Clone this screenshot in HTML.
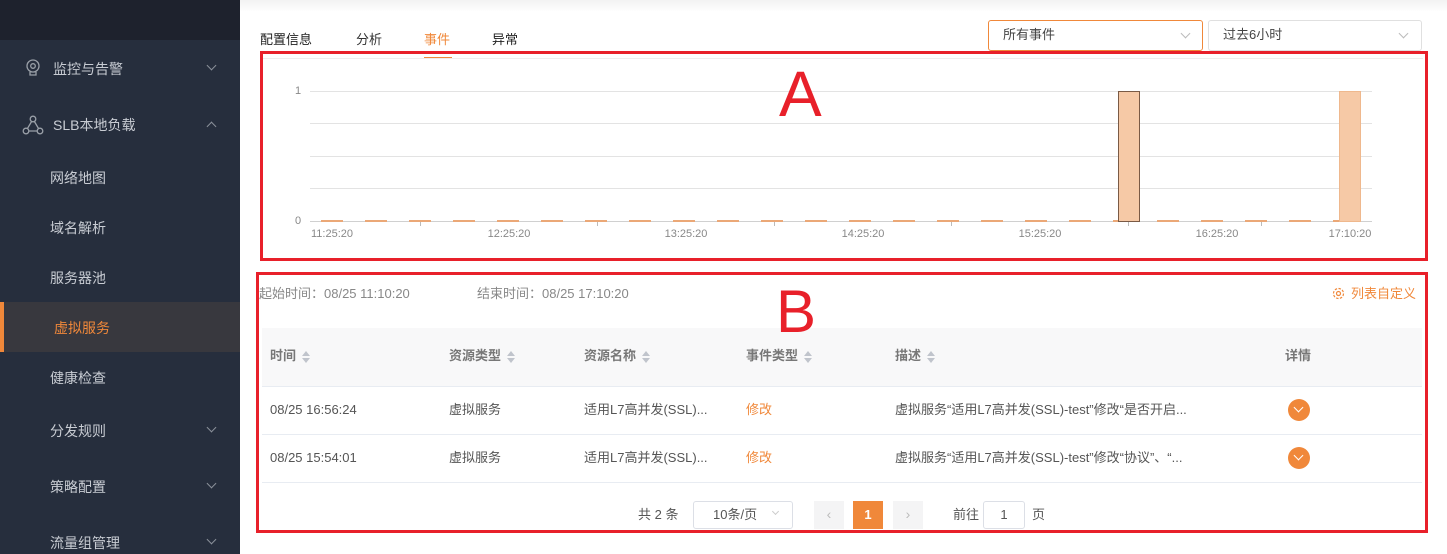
<!DOCTYPE html>
<html><head><meta charset="utf-8"><style>
*{margin:0;padding:0;box-sizing:border-box}
body{width:1447px;height:554px;overflow:hidden;background:#fff;font-family:"Liberation Sans","Noto Sans CJK SC",sans-serif;font-size:13px;color:#333;position:relative;line-height:16px}
.a{position:absolute;white-space:nowrap;line-height:16px}
.side{position:absolute;left:0;top:0;width:240px;height:554px;background:#262e3d}
.side .top{position:absolute;left:0;top:0;width:240px;height:40px;background:#1e222d}
.si{position:absolute;color:#c8ccd3;font-size:14px;line-height:18px}
.chev{position:absolute;width:7px;height:7px;border-right:1px solid #8a909a;border-bottom:1px solid #8a909a;transform:rotate(45deg)}
.chevu{position:absolute;width:7px;height:7px;border-left:1px solid #8a909a;border-top:1px solid #8a909a;transform:rotate(45deg)}
.grid{position:absolute;left:310px;width:1062px;height:1px;background:#e3e3e3}
.tl{position:absolute;top:227px;font-size:11px;color:#888;width:80px;text-align:center;line-height:14px}
.sort{display:inline-block;vertical-align:middle;margin-left:6px;width:8px;height:12px;position:relative}
.sort:before{content:"";position:absolute;left:0;top:0;border:4px solid transparent;border-bottom:5px solid #c0c4cc;border-top:0}
.sort:after{content:"";position:absolute;left:0;top:7px;border:4px solid transparent;border-top:5px solid #c0c4cc;border-bottom:0}
.th{position:absolute;top:348px;color:#777;font-weight:bold;font-size:13px;line-height:16px}
.td{position:absolute;font-size:13px;color:#555;line-height:16px}
.hl{position:absolute;left:262px;width:1160px;height:1px;background:#e8ecf2}
.btn{position:absolute;width:22px;height:22px;border-radius:50%;background:#f0883a}
.btn:after{content:"";position:absolute;left:7px;top:5px;width:6px;height:6px;border-right:1.5px solid #fff;border-bottom:1.5px solid #fff;transform:rotate(45deg)}
</style></head><body>
<div class="side"><div class="top"></div>
<svg class="a" style="left:24px;top:58px" width="18" height="20" viewBox="0 0 18 20"><circle cx="9" cy="8" r="6" fill="none" stroke="#9aa0a8" stroke-width="1.3"/><circle cx="9" cy="8" r="2.3" fill="none" stroke="#9aa0a8" stroke-width="1.3"/><path d="M6 14v3h6v-3" fill="none" stroke="#9aa0a8" stroke-width="1.3"/></svg>
<div class="si" style="left:53px;top:60px">监控与告警</div><div class="chev" style="left:208px;top:62px"></div>
<svg class="a" style="left:22px;top:115px" width="22" height="20" viewBox="0 0 22 20"><circle cx="11" cy="4" r="2.8" fill="none" stroke="#9aa0a8" stroke-width="1.3"/><circle cx="4" cy="16" r="2.8" fill="none" stroke="#9aa0a8" stroke-width="1.3"/><circle cx="18" cy="16" r="2.8" fill="none" stroke="#9aa0a8" stroke-width="1.3"/><path d="M9.6 6.5L5.4 13.6M12.4 6.5l4.2 7.1M6.8 16h8.4" stroke="#9aa0a8" stroke-width="1.3"/></svg>
<div class="si" style="left:53px;top:116px">SLB本地负载</div><div class="chevu" style="left:208px;top:123px"></div>
<div class="si" style="left:50px;top:169px">网络地图</div>
<div class="si" style="left:50px;top:219px">域名解析</div>
<div class="si" style="left:50px;top:269px">服务器池</div>
<div class="a" style="left:0;top:302px;width:240px;height:50px;background:#38383e"></div>
<div class="a" style="left:0;top:302px;width:4px;height:50px;background:#f0883a"></div>
<div class="si" style="left:54px;top:319px;color:#f0883a">虚拟服务</div>
<div class="si" style="left:50px;top:369px">健康检查</div>
<div class="si" style="left:50px;top:422px">分发规则</div><div class="chev" style="left:208px;top:424px"></div>
<div class="si" style="left:50px;top:478px">策略配置</div><div class="chev" style="left:208px;top:480px"></div>
<div class="si" style="left:50px;top:534px">流量组管理</div><div class="chev" style="left:208px;top:536px"></div>
</div>
<div class="a" style="left:240px;top:0;width:1207px;height:12px;background:linear-gradient(#f2f2f2,#fff)"></div>
<div class="a" style="left:260px;top:32px;font-size:13px;color:#222">配置信息</div>
<div class="a" style="left:356px;top:32px;font-size:13px;color:#333">分析</div>
<div class="a" style="left:424px;top:32px;font-size:13px;color:#f0883a">事件</div>
<div class="a" style="left:424px;top:57px;width:28px;height:2px;background:#f0883a"></div>
<div class="a" style="left:492px;top:32px;font-size:13px;color:#222">异常</div>
<div class="a" style="left:988px;top:20px;width:215px;height:31px;border:1px solid #f0883a;border-radius:3px"></div>
<div class="a" style="left:1003px;top:27px;color:#444">所有事件</div><div class="chev" style="left:1182px;top:30px;border-color:#bbb"></div>
<div class="a" style="left:1208px;top:20px;width:214px;height:31px;border:1px solid #e0e0e0;border-radius:3px"></div>
<div class="a" style="left:1223px;top:27px;color:#444">过去6小时</div><div class="chev" style="left:1400px;top:30px;border-color:#bbb"></div>
<div class="a" style="left:263px;top:58px;width:1160px;height:1px;background:#eee"></div>
<div class="a" style="left:295px;top:83px;font-size:11px;color:#888">1</div>
<div class="a" style="left:295px;top:213px;font-size:11px;color:#888">0</div>
<div class="grid" style="top:91px"></div><div class="grid" style="top:123px"></div><div class="grid" style="top:156px"></div><div class="grid" style="top:188px"></div><div class="grid" style="top:221px;background:#d0d0d0"></div>
<div class="a" style="left:321px;top:220px;width:1040px;height:2px;background:repeating-linear-gradient(90deg,#eba877 0 22px,transparent 22px 44px)"></div>
<div class="a" style="left:1118px;top:91px;width:22px;height:131px;background:#f6c9a6;border:1px solid #7a5a45"></div>
<div class="a" style="left:1339px;top:91px;width:22px;height:131px;background:#f6c9a6;border:1px solid #efb88d"></div>
<div class="a" style="left:420px;top:222px;width:1px;height:4px;background:#bbb"></div>
<div class="a" style="left:597px;top:222px;width:1px;height:4px;background:#bbb"></div>
<div class="a" style="left:774px;top:222px;width:1px;height:4px;background:#bbb"></div>
<div class="a" style="left:951px;top:222px;width:1px;height:4px;background:#bbb"></div>
<div class="a" style="left:1128px;top:222px;width:1px;height:4px;background:#bbb"></div>
<div class="a" style="left:1261px;top:222px;width:1px;height:4px;background:#bbb"></div>
<div class="tl" style="left:292px">11:25:20</div><div class="tl" style="left:469px">12:25:20</div><div class="tl" style="left:646px">13:25:20</div><div class="tl" style="left:823px">14:25:20</div><div class="tl" style="left:1000px">15:25:20</div><div class="tl" style="left:1177px">16:25:20</div><div class="tl" style="left:1310px">17:10:20</div>
<div class="a" style="left:259px;top:286px;color:#888">起始时间：08/25 11:10:20</div>
<div class="a" style="left:477px;top:286px;color:#888">结束时间：08/25 17:10:20</div>
<svg class="a" style="left:1332px;top:287px" width="13" height="13" viewBox="0 0 13 13"><circle cx="6.5" cy="6.5" r="2" fill="none" stroke="#f0883a" stroke-width="1.2"/><circle cx="6.5" cy="6.5" r="5" fill="none" stroke="#f0883a" stroke-width="1.2" stroke-dasharray="2.5 1.4"/></svg>
<div class="a" style="left:1351px;top:286px;color:#f0883a">列表自定义</div>
<div class="a" style="left:262px;top:328px;width:1160px;height:58px;background:#f8f8f9"></div>
<div class="th" style="left:270px">时间<span class="sort"></span></div>
<div class="th" style="left:449px">资源类型<span class="sort"></span></div>
<div class="th" style="left:584px">资源名称<span class="sort"></span></div>
<div class="th" style="left:746px">事件类型<span class="sort"></span></div>
<div class="th" style="left:895px">描述<span class="sort"></span></div>
<div class="th" style="left:1285px">详情</div>
<div class="hl" style="top:386px"></div><div class="hl" style="top:434px"></div><div class="hl" style="top:482px"></div>
<div class="td" style="left:270px;top:402px">08/25 16:56:24</div><div class="td" style="left:449px;top:402px">虚拟服务</div><div class="td" style="left:584px;top:402px">适用L7高并发(SSL)...</div><div class="td" style="left:746px;top:402px;color:#f0883a">修改</div><div class="td" style="left:895px;top:402px">虚拟服务“适用L7高并发(SSL)-test”修改“是否开启...</div><div class="btn" style="left:1288px;top:399px"></div>
<div class="td" style="left:270px;top:450px">08/25 15:54:01</div><div class="td" style="left:449px;top:450px">虚拟服务</div><div class="td" style="left:584px;top:450px">适用L7高并发(SSL)...</div><div class="td" style="left:746px;top:450px;color:#f0883a">修改</div><div class="td" style="left:895px;top:450px">虚拟服务“适用L7高并发(SSL)-test”修改“协议”、“...</div><div class="btn" style="left:1288px;top:447px"></div>
<div class="a" style="left:638px;top:507px;color:#555">共 2 条</div>
<div class="a" style="left:693px;top:501px;width:100px;height:28px;border:1px solid #dcdfe6;border-radius:3px"></div>
<div class="a" style="left:713px;top:507px;color:#555">10条/页</div><div class="chev" style="left:773px;top:509px;border-color:#ccc;width:5px;height:5px"></div>
<div class="a" style="left:814px;top:501px;width:30px;height:28px;background:#f4f4f5;color:#bbb;text-align:center;line-height:27px;font-size:14px">‹</div>
<div class="a" style="left:853px;top:501px;width:30px;height:28px;background:#f0883a;color:#fff;text-align:center;line-height:28px;font-weight:bold">1</div>
<div class="a" style="left:893px;top:501px;width:30px;height:28px;background:#f4f4f5;color:#bbb;text-align:center;line-height:27px;font-size:14px">›</div>
<div class="a" style="left:953px;top:507px;color:#555">前往</div>
<div class="a" style="left:983px;top:501px;width:42px;height:28px;border:1px solid #dcdfe6;border-radius:3px;text-align:center;line-height:26px;color:#555">1</div>
<div class="a" style="left:1032px;top:507px;color:#555">页</div>
<div class="a" style="left:260px;top:51px;width:1168px;height:210px;border:3px solid #e8202a"></div>
<div class="a" style="left:256px;top:272px;width:1172px;height:261px;border:3px solid #e8202a"></div>
<div class="a" style="left:779px;top:62px;font-size:64px;color:#e8202a;line-height:64px">A</div>
<div class="a" style="left:776px;top:282px;font-size:60px;color:#e8202a;line-height:60px">B</div>
</body></html>
